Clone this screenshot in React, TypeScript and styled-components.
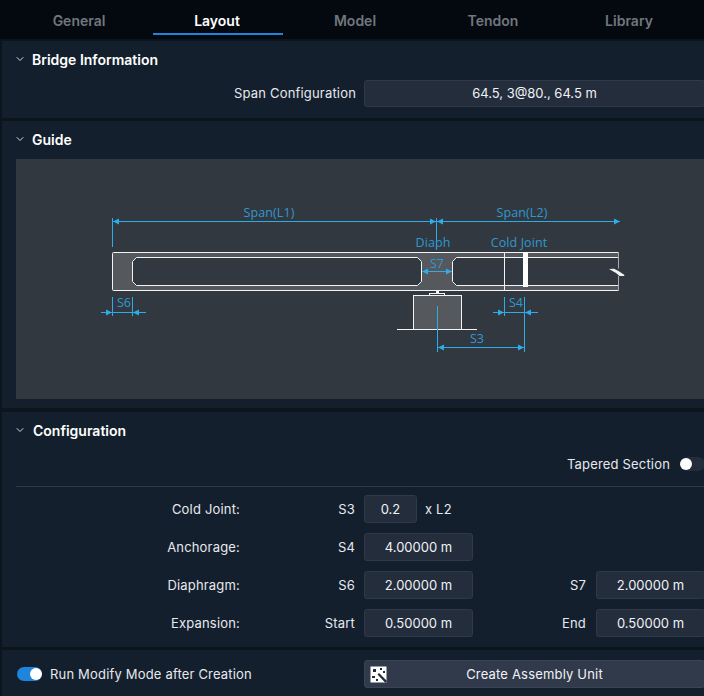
import React from 'react';
import styled, { createGlobalStyle } from 'styled-components';
import { ChevronDown } from 'lucide-react';

const GlobalStyle = createGlobalStyle`
  html, body {
    margin: 0;
    padding: 0;
    background: #0c141e;
  }
  body {
    font-family: Inter, "Noto Sans", sans-serif;
    font-size: 13px;
    letter-spacing: 0.18px;
    color: #e6e9ee;
  }
`;

const Page = styled.div`
  width: 704px;
  height: 696px;
  overflow: hidden;
  background: #0c141e;
`;

const Inner = styled.div`
  width: 703px;
  margin-left: 2px;
`;

const Tabs = styled.div`
  display: flex;
  height: 39px;
  padding-left: 10px;
  background: #04090f;
`;

const Tab = styled.div<{ $active?: boolean }>`
  position: relative;
  width: 138px;
  line-height: 41px;
  text-align: center;
  font-size: 14px;
  font-weight: 600;
  letter-spacing: 0;
  color: ${(p) => (p.$active ? '#ffffff' : '#70777f')};

  &:last-child {
    margin-left: -2px;
  }

  ${(p) =>
    p.$active &&
    `&::after {
      content: '';
      position: absolute;
      left: 5px;
      right: 3px;
      bottom: 4px;
      height: 2px;
      background: #1d85dc;
    }`}
`;

const Panel = styled.section<{ $height: number; $gap?: number }>`
  height: ${(p) => p.$height}px;
  margin-top: ${(p) => p.$gap ?? 3}px;
  padding: 0 0 0 14px;
  background: #141f2d;
  overflow: hidden;
`;

const PanelHeader = styled.div<{ $gap?: number }>`
  display: flex;
  align-items: center;
  height: 36px;
  margin-bottom: 2px;
  gap: ${(p) => p.$gap ?? 6}px;
  font-size: 14px;
  font-weight: 600;
  letter-spacing: 0;
  color: #fff;
`;

const Chevron = styled(ChevronDown)`
  width: 12px;
  height: 12px;
  margin-left: -2px;
  color: #d5d9de;
`;

const Input = styled.div<{ $width?: number }>`
  box-sizing: border-box;
  width: ${(p) => (p.$width ? `${p.$width}px` : '100%')};
  height: 28px;
  line-height: 26px;
  text-align: center;
  background: #232d3c;
  border: 1px solid #2f3948;
  border-radius: 3px;
  color: #f0f2f5;
  font-size: 13px;
  letter-spacing: 0;
`;

const SpanInput = styled(Input)`
  height: 27px;
  line-height: 25px;
  margin-top: 1px;
`;

const SpanRow = styled.div`
  display: grid;
  grid-template-columns: 340px 1fr;
  column-gap: 8px;
  align-items: center;
  text-align: right;
  margin-top: 1px;
`;

const Diagram = styled.div`
  height: 240px;
  background: #32383f;
`;

const GuideSvg = styled.svg`
  display: block;
`;

const DimText = styled.text`
  font-family: "Open Sans", Inter, sans-serif;
  font-size: 12.5px;
  letter-spacing: 0.1px;
  fill: #2f98cf;
  text-anchor: middle;
`;

const SwitchRow = styled.div`
  display: flex;
  justify-content: flex-end;
  align-items: center;
  gap: 10px;
  height: 36px;
  margin-top: -4px;
`;

const Switch = styled.div<{ $on?: boolean }>`
  position: relative;
  flex: none;
  width: 25px;
  height: 14px;
  border-radius: 7px;
  background: ${(p) => (p.$on ? '#1d85dc' : '#232d3c')};

  &::after {
    content: '';
    position: absolute;
    top: 1px;
    left: ${(p) => (p.$on ? '13px' : '0')};
    width: 12px;
    height: 12px;
    border-radius: 50%;
    background: #fff;
  }
`;

const Divider = styled.div`
  height: 1px;
  background: #303945;
  margin-top: 4px;
`;

const FormGrid = styled.div`
  display: grid;
  grid-template-columns: 224px 124px 109px 123px 109px;
  row-gap: 10px;
  margin-top: 8px;
  align-items: center;
`;

const RowLabel = styled.div`
  text-align: right;
`;

const FieldLabel = styled.div`
  text-align: right;
  padding-right: 9px;
`;

const SideField = styled(FieldLabel)`
  padding-right: 10px;
`;

const InputCell = styled.div<{ $span?: number }>`
  display: flex;
  align-items: center;
  gap: 8px;
  grid-column: span ${(p) => p.$span ?? 1};
`;

const Footer = styled.div`
  display: grid;
  grid-template-columns: 348px 1fr;
  align-items: center;
  height: 48px;
`;

const RunOption = styled.label`
  display: flex;
  align-items: center;
  gap: 8px;
  margin-left: 1px;
`;

const CreateButton = styled.div`
  position: relative;
  box-sizing: border-box;
  height: 28px;
  line-height: 26px;
  text-align: center;
  background: #303a4b;
  border: 1px solid #3a4454;
  border-radius: 3px;
  color: #f0f2f5;
`;

const WandIcon = styled.svg`
  position: absolute;
  left: 5px;
  top: 5px;
  width: 17px;
  height: 17px;
`;

const BLUE = '#2eace8';
const WHITE = '#f2f3f4';
const GRAY = '#55585c';
const BG = '#32383f';

const Arrow: React.FC<{ x: number; y: number; dir: 'l' | 'r' }> = ({ x, y, dir }) => {
  const d = dir === 'r' ? -6 : 6;
  return <polygon points={`${x},${y} ${x + d},${y - 3} ${x + d},${y + 3}`} fill={BLUE} />;
};

const holeLeft = 'M136.5 257.5 H417.5 L421.5 261.5 V281.5 L417.5 285.5 H136.5 L132.5 281.5 V261.5 Z';
const holeRight = 'M618 257.5 H456.5 L452.5 261.5 V281.5 L456.5 285.5 H618';

const BridgeDiagram: React.FC = () => (
  // coordinates follow the page so the diagram is shifted by the box origin
  <GuideSvg width={704} height={240} viewBox="16 159 704 240">
    <path d="M112.5 252.5 H618.5 V290.5 H112.5 Z" fill={GRAY} />
    <path d={holeLeft} fill={BG} stroke={WHITE} />
    <path d="M456.5 257.5 H618.5 V285.5 H456.5 L452.5 281.5 V261.5 Z" fill={BG} />
    <path d={holeRight} fill="none" stroke={WHITE} />
    <path d="M618.5 252.5 H113.5 Q112.5 252.5 112.5 253.5 V289.5 Q112.5 290.5 113.5 290.5 H618.5" fill="none" stroke={WHITE} />
    <path d="M618.5 252.5 V268.5 M618.5 276 V290.5" fill="none" stroke="#a9acaf" />
    <polygon points="609,269 614,268.8 618.5,271 624.5,275 624,276 619.5,276 616,273" fill={WHITE} />

    <line x1={504.5} y1={252} x2={504.5} y2={290.5} stroke={WHITE} />
    <rect x={523} y={252} width={5} height={35} fill="#fff" />

    {/* support */}
    <rect x={413.5} y={295.5} width={48} height={34} fill={GRAY} stroke={WHITE} />
    <line x1={397} y1={329.5} x2={477} y2={329.5} stroke={WHITE} />
    <rect x={429.5} y={293.5} width={15} height={2} fill={BG} stroke={WHITE} />
    <rect x={436} y={291} width={3} height={3} fill={WHITE} />

    {/* dimension lines */}
    <g stroke={BLUE}>
      <line x1={112.5} y1={218} x2={112.5} y2={247} />
      <line x1={112.5} y1={221.5} x2={620} y2={221.5} />
      <line x1={436.5} y1={218} x2={436.5} y2={249} />
      <line x1={112.5} y1={297} x2={112.5} y2={316} />
      <line x1={132.5} y1={297} x2={132.5} y2={316} />
      <line x1={101} y1={312.5} x2={146} y2={312.5} />
      <line x1={422} y1={271.5} x2={452} y2={271.5} />
      <line x1={504.5} y1={297} x2={504.5} y2={316} />
      <line x1={524.5} y1={297} x2={524.5} y2={352} />
      <line x1={493} y1={312.5} x2={538} y2={312.5} />
      <line x1={437.5} y1={306} x2={437.5} y2={352} />
      <line x1={437.5} y1={347.5} x2={524.5} y2={347.5} />
    </g>
    <Arrow x={113} y={221.5} dir="l" />
    <Arrow x={436} y={221.5} dir="r" />
    <Arrow x={437} y={221.5} dir="l" />
    <Arrow x={620} y={221.5} dir="r" />
    <Arrow x={112} y={312.5} dir="r" />
    <Arrow x={133} y={312.5} dir="l" />
    <Arrow x={422} y={271.5} dir="l" />
    <Arrow x={452} y={271.5} dir="r" />
    <Arrow x={504} y={312.5} dir="r" />
    <Arrow x={525} y={312.5} dir="l" />
    <Arrow x={438} y={347.5} dir="l" />
    <Arrow x={524} y={347.5} dir="r" />

    <DimText x={269} y={217}>Span(L1)</DimText>
    <DimText x={522} y={217}>Span(L2)</DimText>
    <DimText x={433} y={247}>Diaph</DimText>
    <DimText x={519} y={247}>Cold Joint</DimText>
    <DimText x={124} y={307}>S6</DimText>
    <DimText x={437} y={268}>S7</DimText>
    <DimText x={516} y={307}>S4</DimText>
    <DimText x={477} y={343}>S3</DimText>
  </GuideSvg>
);

const Wand: React.FC = () => (
  <WandIcon viewBox="0 0 17 17">
    <rect x={0.5} y={0.5} width={16} height={16} fill="#fff" />
    <path d="M7.5 8.5 L9 7 L16.5 14.5 L16.5 16.5 L15 16.5 Z" fill="#232c3a" />
    <path d="M3 3 h3 v3 h-3 Z M10 2 h2 v2 h-2 Z M13 5 h2 v2 h-2 Z M2 10 h3 v2 h-3 Z M6 13 h2 v2 h-2 Z" fill="#232c3a" />
  </WandIcon>
);

const tabs = ['General', 'Layout', 'Model', 'Tendon', 'Library'];

const App: React.FC = () => (
  <Page>
    <GlobalStyle />
    <Tabs>
      {tabs.map((t) => (
        <Tab key={t} $active={t === 'Layout'}>
          {t}
        </Tab>
      ))}
    </Tabs>
    <Inner>
      <Panel $height={77} $gap={2}>
        <PanelHeader>
          <Chevron />
          Bridge Information
        </PanelHeader>
        <SpanRow>
          <span>Span Configuration</span>
          <SpanInput>64.5, 3@80., 64.5 m</SpanInput>
        </SpanRow>
      </Panel>

      <Panel $height={287}>
        <PanelHeader>
          <Chevron />
          Guide
        </PanelHeader>
        <Diagram>
          <BridgeDiagram />
        </Diagram>
      </Panel>

      <Panel $height={235} $gap={4}>
        <PanelHeader $gap={7}>
          <Chevron />
          Configuration
        </PanelHeader>
        <SwitchRow>
          <span>Tapered Section</span>
          <Switch />
        </SwitchRow>
        <Divider />
        <FormGrid>
          <RowLabel>Cold Joint:</RowLabel>
          <FieldLabel>S3</FieldLabel>
          <InputCell $span={3}>
            <Input $width={53}>0.2</Input>
            <span>x L2</span>
          </InputCell>

          <RowLabel>Anchorage:</RowLabel>
          <FieldLabel>S4</FieldLabel>
          <InputCell $span={3}>
            <Input $width={109}>4.00000 m</Input>
          </InputCell>

          <RowLabel>Diaphragm:</RowLabel>
          <FieldLabel>S6</FieldLabel>
          <InputCell>
            <Input $width={109}>2.00000 m</Input>
          </InputCell>
          <SideField>S7</SideField>
          <InputCell>
            <Input $width={109}>2.00000 m</Input>
          </InputCell>

          <RowLabel>Expansion:</RowLabel>
          <FieldLabel>Start</FieldLabel>
          <InputCell>
            <Input $width={109}>0.50000 m</Input>
          </InputCell>
          <SideField>End</SideField>
          <InputCell>
            <Input $width={109}>0.50000 m</Input>
          </InputCell>
        </FormGrid>
      </Panel>

      <Panel $height={46}>
        <Footer>
          <RunOption>
            <Switch $on />
            Run Modify Mode after Creation
          </RunOption>
          <CreateButton>
            <Wand />
            Create Assembly Unit
          </CreateButton>
        </Footer>
      </Panel>
    </Inner>
  </Page>
);

export default App;
